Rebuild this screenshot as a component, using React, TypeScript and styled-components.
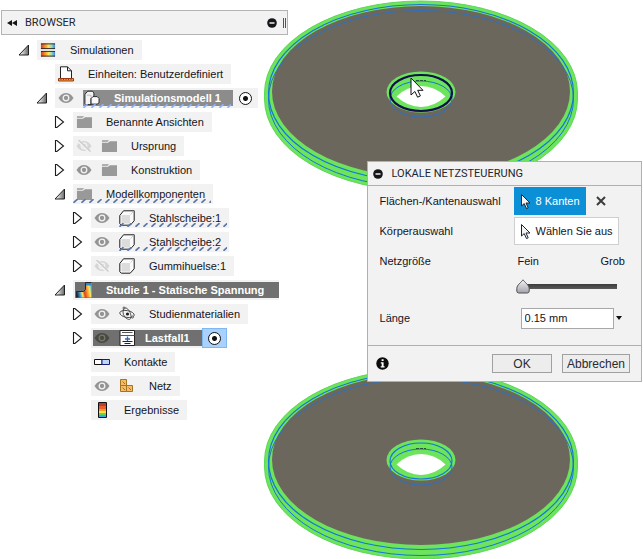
import React, { useState } from "react";
import styled, { createGlobalStyle, css } from "styled-components";

const GlobalStyle = createGlobalStyle`
  * { box-sizing: border-box; }
  body {
    margin: 0;
    background: #ffffff;
    color: #14141c;
    font: 11px/20px "Liberation Sans", Arial, sans-serif;
    overflow-x: hidden;
  }
  button, input { font: inherit; color: inherit; margin: 0; }
`;

const plainButton = css`
  display: flex;
  align-items: center;
  justify-content: center;
  padding: 0;
  border: 0;
  background: none;
  cursor: pointer;
`;

/* ---------- page ---------- */

const Page = styled.main`
  position: relative;
  display: grid;
  grid-template-columns: 45% minmax(0, 1fr) 43%;
  align-items: start;
  min-height: 100vh;
`;

const Scene = styled.svg`
  position: absolute;
  top: 0;
  left: 0;
  width: 100%;
  display: block;
`;

/* ---------- browser panel ---------- */

const BrowserPanel = styled.section`
  position: relative;
  padding-top: 10px;
`;

const BrowserHeader = styled.header`
  display: flex;
  align-items: center;
  height: 25px;
  margin: 0 1px;
  padding: 0 1px 0 5px;
  border: 1px solid #b4b4b4;
  background: #f2f2f2;
`;

const PanelTitle = styled.h2`
  flex: 1;
  margin: 0;
  padding-left: 8px;
  font: 400 11px/20px Roboto, "Liberation Sans", sans-serif;
  color: #22262e;
`;

const HeaderButton = styled.button<{ $width: number }>`
  ${plainButton}
  width: ${(p) => p.$width}px;
  height: 20px;
`;

const Grip = styled.span`
  width: 3px;
  height: 10px;
  margin-left: 6px;
  border: solid #555;
  border-width: 0 1px;
`;

const Tree = styled.ul`
  display: flex;
  flex-direction: column;
  gap: 4px;
  margin: 5px 0 0;
  padding: 0;
  list-style: none;
`;

const TreeRow = styled.li<{ $level: number }>`
  display: flex;
  height: 20px;
  padding-left: ${(p) => 15 + p.$level * 18}px;
`;

const Expander = styled.button`
  ${plainButton}
  width: 22px;
  height: 20px;
  justify-content: flex-start;
  padding-left: 3px;
`;

const ExpanderSpace = styled.span`
  width: 22px;
`;

const hatch = css`
  &::after {
    content: "";
    position: absolute;
    left: 0;
    right: 2px;
    bottom: 1px;
    height: 4px;
    background: url("data:image/svg+xml,%3Csvg xmlns='http://www.w3.org/2000/svg' width='8' height='4'%3E%3Cpath d='M0.5 3.8L4.5 0.2' stroke='%235c76a6' stroke-width='1.7'/%3E%3C/svg%3E") repeat-x;
  }
`;

const Bar = styled.div<{ $hatched?: boolean; $framed?: boolean }>`
  position: relative;
  display: flex;
  align-items: center;
  height: 20px;
  background: #f2f2f2;
  white-space: nowrap;
  padding: ${(p) => (p.$framed ? "2px 0 2px 2px" : "0 0 0 3px")};
  ${(p) => p.$hatched && hatch}
`;

const Highlight = styled.div<{ $tone: string; $hatched?: boolean; $pad: number }>`
  position: relative;
  display: flex;
  align-items: center;
  height: 16px;
  padding-left: ${(p) => p.$pad}px;
  background: ${(p) => p.$tone};
  color: #ffffff;
  font-weight: 700;
  ${(p) => p.$hatched && hatch}
  &::after { bottom: -2px; filter: brightness(1.5); }
`;

const IconSlot = styled.span`
  display: flex;
  width: 16px;
  height: 16px;
  margin-right: 9px;
`;

const EyeButton = styled.button`
  ${plainButton}
  width: 16px;
  height: 16px;
  margin-right: 9px;
`;

const Label = styled.span<{ $start?: number; $end?: number }>`
  padding: 0 ${(p) => p.$end ?? 8}px 0 ${(p) => p.$start ?? 5}px;
`;

const HatchSpan = styled.div`
  position: relative;
  display: flex;
  align-items: center;
  height: 20px;
  ${hatch}
`;

const RadioHolder = styled.label<{ $active?: boolean }>`
  display: flex;
  align-items: center;
  justify-content: center;
  width: 25px;
  height: 20px;
  ${(p) =>
    p.$active &&
    css`
      margin: -2px 0;
      background: #a9d1fb;
      border: 1px solid #7db8f0;
    `}
`;

const Radio = styled.input`
  appearance: none;
  width: 13px;
  height: 13px;
  border: 1px solid #111;
  border-radius: 50%;
  background: radial-gradient(circle, #111 0 2px, #fff 3px);
`;

/* ---------- dialog ---------- */

const Dialog = styled.form`
  position: relative;
  grid-column: 3;
  margin: 161px 1px 0 0;
  border: 1px solid #b0b0b0;
  background: #f2f2f2;
`;

const DialogHeader = styled.header`
  display: flex;
  align-items: center;
  height: 24px;
  padding-left: 4px;
  border-bottom: 1px solid #b0b0b0;
`;

const Fields = styled.div`
  display: flex;
  flex-direction: column;
  height: 159px;
  padding: 0 12px;
`;

const Field = styled.div<{ $height: number }>`
  display: grid;
  grid-template-columns: 134px minmax(0, 1fr);
  align-items: center;
  height: ${(p) => p.$height}px;
`;

const Controls = styled.div`
  display: flex;
  align-items: center;
`;

const PickButton = styled.button<{ $primary?: boolean }>`
  ${plainButton}
  gap: 4px;
  height: 28px;
  padding: 0 5px;
  border: 1px solid ${(p) => (p.$primary ? "#0b8fd6" : "#cfcfcf")};
  background: ${(p) => (p.$primary ? "#0b90d8" : "#ffffff")};
  color: ${(p) => (p.$primary ? "#ffffff" : "#14141c")};
  white-space: nowrap;
`;

const ClearButton = styled.button`
  ${plainButton}
  width: 10px;
  height: 20px;
  margin-left: 10px;
`;

const RangeNames = styled.div`
  display: flex;
  justify-content: space-between;
  padding: 0 4px;
`;

const Slider = styled.input`
  appearance: none;
  display: block;
  width: 102px;
  height: 16px;
  margin: 0 0 0 2px;
  background: linear-gradient(#3c3c3c, #5a5a5a) 10px 6px / 91px 5px no-repeat;
  &::-webkit-slider-thumb {
    appearance: none;
    width: 14px;
    height: 15px;
    background: url("data:image/svg+xml,%3Csvg xmlns='http://www.w3.org/2000/svg' width='14' height='15'%3E%3Cdefs%3E%3ClinearGradient id='g' x2='0' y2='1'%3E%3Cstop stop-color='%23f4f4f6'/%3E%3Cstop offset='1' stop-color='%23a2a3aa'/%3E%3C/linearGradient%3E%3C/defs%3E%3Cpath d='M7 .8C8.7 3.3 13.2 6 13.2 9.5V12q0 2-2 2H2.8q-2 0-2-2V9.5C.8 6 5.3 3.3 7 .8Z' fill='url(%23g)' stroke='%23505055'/%3E%3C/svg%3E");
  }
`;

const ValueInput = styled.input`
  width: 93px;
  height: 21px;
  margin-left: 7px;
  padding: 0 3px;
  border: 1px solid #a8a8a8;
  background: #ffffff;
`;

const DropButton = styled.button`
  ${plainButton}
  width: 10px;
  height: 20px;
`;

const DialogFooter = styled.footer`
  display: flex;
  align-items: center;
  justify-content: flex-end;
  gap: 10px;
  height: 36px;
  padding: 0 11px 0 8px;
  border-top: 1px solid #b0b0b0;
`;

const InfoButton = styled.button`
  ${plainButton}
  width: 13px;
  height: 20px;
  margin-right: auto;
`;

const ActionButton = styled.button<{ $width: number }>`
  ${plainButton}
  width: ${(p) => p.$width}px;
  height: 19px;
  border: 1px solid #a0a0a0;
  background: #ededed;
  color: #2a2a30;
  font-size: 12px;
`;

/* ---------- icons ---------- */

const MinusIcon = () => (
  <svg width="10" height="10" viewBox="0 0 10 10">
    <circle cx="5" cy="5" r="4.8" fill="#16161a" />
    <path d="M2.5 5h5" stroke="#fff" strokeWidth="1.4" />
  </svg>
);

const RewindIcon = () => (
  <svg width="10" height="8" viewBox="0 0 10 8">
    <path d="M5 1v6L0 4zM10 1v6L5 4z" fill="#16161a" />
  </svg>
);

const OpenTriangle = () => (
  <svg width="12" height="12" viewBox="0 0 12 12">
    <defs>
      <linearGradient id="openShade">
        <stop offset="0.2" stopColor="#eee" />
        <stop offset="1" stopColor="#666" />
      </linearGradient>
    </defs>
    <path d="M10.5 1v10H1z" fill="url(#openShade)" stroke="#222" />
  </svg>
);

const ClosedTriangle = () => (
  <svg width="12" height="14" viewBox="0 0 12 14">
    <path d="M1.5 1.5h1.4L9.5 7l-6.6 5.5H1.5z" fill="#fff" stroke="#1c1c1c" strokeWidth="1.1" />
  </svg>
);

const EyeIcon = ({ tone = "#949494", pupil = "#f2f2f2" }: { tone?: string; pupil?: string }) => (
  <svg width="16" height="12" viewBox="0 0 16 12">
    <path d="M.5 6C3 2.2 5.4 1 8 1s5 1.2 7.5 5C13 9.8 10.6 11 8 11S3 9.8.5 6z" fill={tone} />
    <circle cx="8" cy="6" r="2.8" fill="none" stroke={pupil} strokeWidth="1.3" />
  </svg>
);

const EyeOffIcon = () => (
  <svg width="16" height="12" viewBox="0 0 16 12">
    <path d="M.5 6C3 2.2 5.4 1 8 1s5 1.2 7.5 5C13 9.8 10.6 11 8 11S3 9.8.5 6z" fill="#d6d6d6" />
    <circle cx="8" cy="6" r="2.8" fill="none" stroke="#f2f2f2" strokeWidth="1.3" />
    <path d="M2 .5L14 12" stroke="#f2f2f2" strokeWidth="3" />
    <path d="M2.5 0L14.5 11.5" stroke="#cacaca" strokeWidth="1.3" />
  </svg>
);

const FolderIcon = () => (
  <svg width="17" height="16" viewBox="0 0 17 16">
    <path d="M1 2h7.5L7 3.5H1z" fill="#999" />
    <path d="M1 4.500h6.500L9.500 3H17v11.500H1z" fill="#999" />
  </svg>
);

const SimulationsIcon = () => (
  <svg width="17" height="16" viewBox="0 0 17 16">
    <defs>
      <linearGradient id="heat">
        <stop stopColor="#d43c22" />
        <stop offset="0.3" stopColor="#f59428" />
        <stop offset="0.55" stopColor="#ffe45c" />
        <stop offset="0.75" stopColor="#8fdcc8" />
        <stop offset="1" stopColor="#3f86d8" />
      </linearGradient>
    </defs>
    <path d="M1 1h15v6H1zM1 9h15v6H1z" fill="url(#heat)" />
    <path d="M1 1.500h15M1 6.500h15M1 9.500h15M1 14.500h15" stroke="#2b2522" />
  </svg>
);

const UnitsIcon = () => (
  <svg width="16" height="16" viewBox="0 0 16 16">
    <path d="M2.500 12.500V.8h7l4 4v7.700" fill="#fff" stroke="#222" />
    <path d="M9.500.8v4h4" fill="none" stroke="#222" />
    <path d="M.5 12.500h15v2.500H.5z" fill="#e9a23a" stroke="#9c3a16" />
    <path d="M3 12.500v1.500M5.500 12.500v1.500M8 12.500v1.500M10.500 12.500v1.500M13 12.500v1.500" stroke="#9c3a16" />
  </svg>
);

const BodyGroupIcon = () => (
  <svg width="17" height="16" viewBox="0 0 17 16">
    <path d="M1 14V4L4 .8h5l1.500 2v3.700L7.500 8.500V15H2z" fill="#f4f4f4" stroke="#222" />
    <path d="M7.500 8.500L9.500 6.500h4.500l2 2V13l-2 1.500H7.500z" fill="#f8f8f8" stroke="#222" />
    <path d="M3 5h4.500v2.500" fill="none" stroke="#bbb" />
  </svg>
);

const CubeIcon = () => (
  <svg width="16" height="16" viewBox="0 0 16 16">
    <path d="M.8 5.500L4.500.8H15.200V10.800l-4 4.400H2.300L.8 13.700z" fill="#fafafa" stroke="#1c1c1c" />
    <path d="M2.500 5h8.500v8.500H2.500z" fill="#dcdcdc" />
    <path d="M11.500 4.500l3-3" stroke="#cfcfcf" />
  </svg>
);

const StudyIcon = () => (
  <svg width="16" height="16" viewBox="0 0 16 16">
    <defs>
      <linearGradient id="studyHeat" x1="0" y1="0.6" x2="1" y2="0.4">
        <stop stopColor="#1d2a3c" />
        <stop offset="0.2" stopColor="#3aa0dc" />
        <stop offset="0.35" stopColor="#ffe45c" />
        <stop offset="0.5" stopColor="#e5401e" />
        <stop offset="0.7" stopColor="#f79a32" />
        <stop offset="0.85" stopColor="#ffe45c" />
        <stop offset="1" stopColor="#58c8e8" />
      </linearGradient>
    </defs>
    <path d="M9.500.5h6v15H.5V9.500h7l2-2z" fill="url(#studyHeat)" />
    <path d="M15.500.5h-6v7l-2 2H.5v6" fill="none" stroke="#25272c" />
    <path d="M10 1h5.500v2.500H10z" fill="#2f86d0" />
  </svg>
);

const MaterialsIcon = () => (
  <svg width="16" height="16" viewBox="0 0 16 16" fill="none" stroke="#444" strokeWidth="0.9">
    <ellipse cx="8" cy="8" rx="7.300" ry="3.400" transform="rotate(10 8 8)" />
    <path d="M4 6C4 3 5 1.500 7 2c2.500.8 5 5 5 8.500 0 3-1.500 3.500-3.500 2.500C6 12 4 9 4 6z" />
    <circle cx="8.500" cy="8" r="1.600" fill="#1c1c1c" stroke="none" />
    <circle cx="5" cy="2" r="1" fill="#fff" />
    <circle cx="13.500" cy="11" r="1" fill="#fff" />
  </svg>
);

const LoadCaseIcon = () => (
  <svg width="16" height="16" viewBox="0 0 16 16">
    <path d="M1 .5h14.500v15H1z" fill="#fff" stroke="#222" />
    <path d="M3 2.500h10.500M1 5.500h14.500" stroke="#555" />
    <path d="M8.500 6.500v4.500M6 9h5" stroke="#2767c8" strokeWidth="1.300" />
    <path d="M3.500 11.500h10M5.500 13.500h6" stroke="#222" />
  </svg>
);

const ContactsIcon = () => (
  <svg width="16" height="16" viewBox="0 0 16 16">
    <path d="M.5 5.500H8v5H.5z" fill="#fff" stroke="#111" />
    <path d="M8 5.500h7.500v5H8z" fill="#bcd6f8" stroke="#1b1b7c" />
  </svg>
);

const MeshIcon = () => (
  <svg width="16" height="16" viewBox="0 0 16 16" fill="#f6bd66" stroke="#a07424">
    <path d="M1.500 1.500h6v6h-6zM1.500 7.500h6v6h-6zM7.500 7.500h6v6h-6z" />
    <path d="M3.500 3.500l2.500 2.500M3.500 9.500l2.500 2.500M9.500 9.500l2.500 2.500" />
  </svg>
);

const ResultsIcon = () => (
  <svg width="16" height="16" viewBox="0 0 16 16">
    <path d="M4 1h8v14H4z" fill="#e8602c" />
    <path d="M4 1h8v3H4z" fill="#b8402c" />
    <path d="M4 7h8v2H4z" fill="#f79a22" />
    <path d="M4 9h8v2H4z" fill="#fbe23c" />
    <path d="M4 11h8v2H4z" fill="#5cd65c" />
    <path d="M4 13h8v2H4z" fill="#38a8e8" />
    <path d="M4.500.5h8v15h-8z" fill="none" stroke="#111" />
  </svg>
);

const PointerIcon = () => (
  <svg width="12" height="17" viewBox="0 0 12 17">
    <path d="M1.500 1.500v11.500l2.700-2.400 2.300 5 1.700-.8-2.200-4.800h4z" fill="#f4f4f4" stroke="#1c2430" />
  </svg>
);

const CrossIcon = () => (
  <svg width="10" height="10" viewBox="0 0 10 10">
    <path d="M1 1l8 8M9 1L1 9" stroke="#3c3c3c" strokeWidth="2" />
  </svg>
);

const CaretIcon = () => (
  <svg width="6" height="4" viewBox="0 0 6 4">
    <path d="M0 0h6L3 4z" fill="#111" />
  </svg>
);

const InfoIcon = () => (
  <svg width="13" height="13" viewBox="0 0 13 13">
    <circle cx="6.500" cy="6.500" r="6.200" fill="#0c0c0e" />
    <path d="M5.600 2.300h2v1.800h-2zM4.800 5.300h2.800v4h1v1.300H4.700V9.300h1V6.600h-.9z" fill="#fff" />
  </svg>
);

/* ---------- 3D scene ---------- */

const Disc = ({ top, hovered }: { top: number; hovered?: boolean }) => (
  <g transform={`translate(421 ${top})`} fill="none">
    <g fill="#6ee35c" stroke="#6ee35c" strokeWidth="8">
      <ellipse rx="152.500" ry="88" />
      <ellipse cy="6" rx="152.500" ry="88" />
    </g>
    <path
      d="M-156.500 0A156.500 92 0 0 1 156.500 0V6A156.500 92 0 0 1 -156.500 6Z"
      stroke="#5ed858"
    />
    <ellipse cy="-1.500" rx="149" ry="85.500" fill="#6c675c" />
    <path d="M-152.500 6A152.500 88.500 0 0 1 152.500 6" stroke="#2e70bd" />
    <path d="M-152.500 6A152.500 88.500 0 0 0 152.500 6" stroke="#1277d8" />
    <ellipse rx="152.500" ry="88.500" stroke="#1277d8" strokeWidth="1.200" />
    <ellipse cy="-1" rx="34.500" ry="20.500" fill="#6ee35c" />
    <path d="M-24.500 3.500Q-14-7 0-7T24.500 3.500Q13 14 0 14T-24.500 3.500Z" fill="#fff" />
    <path d="M-31 6A31 18 0 0 1 31 6" stroke="#1277d8" />
    <path d="M-31 6A31 18 0 0 0 31 6" stroke="#2e70bd" />
    <ellipse
      rx="31"
      ry="18"
      stroke={hovered ? "#10104c" : "#1277d8"}
      strokeWidth={hovered ? 2.2 : 1.2}
    />
    <path d="M-5-12.500H5" stroke="#24543c" strokeDasharray="3 1" />
  </g>
);

const SceneView = () => (
  <Scene viewBox="0 0 643 559" aria-hidden="true">
    <Disc top={93} hovered />
    <Disc top={461} />
    <path
      d="M411 78v17l3.900-3.500 2.700 5.700 2.800-1.300-2.700-5.600h5.300z"
      fill="#fff"
      stroke="#111"
    />
  </Scene>
);

/* ---------- tree data ---------- */

type Node = {
  label: string;
  level: number;
  expander?: "open" | "closed";
  eye?: "on" | "off";
  icon: React.ReactNode;
  style?: "hatched" | "hatchedItem" | "model" | "study" | "load";
};

const nodes: Node[] = [
  { label: "Simulationen", level: 0, expander: "open", icon: <SimulationsIcon /> },
  { label: "Einheiten: Benutzerdefiniert", level: 1, icon: <UnitsIcon /> },
  { label: "Simulationsmodell 1", level: 1, expander: "open", eye: "on", icon: <BodyGroupIcon />, style: "model" },
  { label: "Benannte Ansichten", level: 2, expander: "closed", icon: <FolderIcon /> },
  { label: "Ursprung", level: 2, expander: "closed", eye: "off", icon: <FolderIcon /> },
  { label: "Konstruktion", level: 2, expander: "closed", eye: "on", icon: <FolderIcon /> },
  { label: "Modellkomponenten", level: 2, expander: "open", icon: <FolderIcon />, style: "hatched" },
  { label: "Stahlscheibe:1", level: 3, expander: "closed", eye: "on", icon: <CubeIcon />, style: "hatchedItem" },
  { label: "Stahlscheibe:2", level: 3, expander: "closed", eye: "on", icon: <CubeIcon />, style: "hatchedItem" },
  { label: "Gummihuelse:1", level: 3, expander: "closed", eye: "off", icon: <CubeIcon /> },
  { label: "Studie 1 - Statische Spannung", level: 2, expander: "open", icon: <StudyIcon />, style: "study" },
  { label: "Studienmaterialien", level: 3, expander: "closed", eye: "on", icon: <MaterialsIcon /> },
  { label: "Lastfall1", level: 3, expander: "closed", eye: "on", icon: <LoadCaseIcon />, style: "load" },
  { label: "Kontakte", level: 3, icon: <ContactsIcon /> },
  { label: "Netz", level: 3, eye: "on", icon: <MeshIcon /> },
  { label: "Ergebnisse", level: 3, icon: <ResultsIcon /> },
];

const Eye = ({ node }: { node: Node }) => {
  const [visible, setVisible] = useState(node.eye === "on");
  if (!node.eye) return null;
  const dark = node.style === "load";
  return (
    <EyeButton type="button" aria-label={`Sichtbarkeit ${node.label}`} aria-pressed={visible} onClick={() => setVisible(!visible)}>
      {visible ? <EyeIcon tone={dark ? "#484a42" : undefined} pupil={dark ? "#77776f" : undefined} /> : <EyeOffIcon />}
    </EyeButton>
  );
};

const NodeBar = ({ node }: { node: Node }) => {
  const eye = <Eye node={node} />;
  const icon = <IconSlot>{node.icon}</IconSlot>;
  switch (node.style) {
    case "model":
      return (
        <Bar>
          {eye}
          <Highlight $tone="#8c8c8c" $hatched $pad={1}>
            {icon}
            <Label $end={12}>{node.label}</Label>
          </Highlight>
          <RadioHolder aria-label={node.label}>
            <Radio type="radio" name="model" defaultChecked />
          </RadioHolder>
        </Bar>
      );
    case "study":
      return (
        <Bar $framed>
          <Highlight $tone="#707070" $pad={1}>
            {icon}
            <Label $end={15}>{node.label}</Label>
          </Highlight>
        </Bar>
      );
    case "load":
      return (
        <Bar $framed>
          <Highlight $tone="#707070" $pad={1}>
            {eye}
            {icon}
            <Label $start={1} $end={12}>{node.label}</Label>
          </Highlight>
          <RadioHolder $active aria-label={node.label}>
            <Radio type="radio" name="loadcase" defaultChecked />
          </RadioHolder>
        </Bar>
      );
    case "hatchedItem":
      return (
        <Bar>
          {eye}
          <HatchSpan>
            {icon}
            <Label>{node.label}</Label>
          </HatchSpan>
        </Bar>
      );
    default:
      return (
        <Bar $hatched={node.style === "hatched"}>
          {eye}
          {icon}
          <Label>{node.label}</Label>
        </Bar>
      );
  }
};

export default function App() {
  const [length, setLength] = useState("0.15 mm");
  return (
    <>
      <GlobalStyle />
      <Page>
        <SceneView />
        <BrowserPanel>
          <BrowserHeader>
            <HeaderButton type="button" $width={10} aria-label="Einklappen">
              <RewindIcon />
            </HeaderButton>
            <PanelTitle>BROWSER</PanelTitle>
            <HeaderButton type="button" $width={10} aria-label="Minimieren">
              <MinusIcon />
            </HeaderButton>
            <Grip />
          </BrowserHeader>
          <Tree>
            {nodes.map((node) => (
              <TreeRow key={node.label} $level={node.level}>
                {node.expander ? (
                  <Expander type="button" aria-label={node.label} aria-expanded={node.expander === "open"}>
                    {node.expander === "open" ? <OpenTriangle /> : <ClosedTriangle />}
                  </Expander>
                ) : (
                  <ExpanderSpace />
                )}
                <NodeBar node={node} />
              </TreeRow>
            ))}
          </Tree>
        </BrowserPanel>
        <Dialog onSubmit={(e) => e.preventDefault()}>
          <DialogHeader>
            <HeaderButton type="button" $width={12} aria-label="Minimieren">
              <MinusIcon />
            </HeaderButton>
            <PanelTitle>LOKALE NETZSTEUERUNG</PanelTitle>
          </DialogHeader>
          <Fields>
            <Field $height={30}>
              <label htmlFor="edges">Flächen-/Kantenauswahl</label>
              <Controls>
                <PickButton id="edges" type="button" $primary>
                  <PointerIcon />8 Kanten
                </PickButton>
                <ClearButton type="button" aria-label="Auswahl aufheben">
                  <CrossIcon />
                </ClearButton>
              </Controls>
            </Field>
            <Field $height={30}>
              <label htmlFor="bodies">Körperauswahl</label>
              <Controls>
                <PickButton id="bodies" type="button">
                  <PointerIcon />Wählen Sie aus
                </PickButton>
              </Controls>
            </Field>
            <Field $height={30}>
              <label htmlFor="size">Netzgröße</label>
              <RangeNames>
                <span>Fein</span>
                <span>Grob</span>
              </RangeNames>
            </Field>
            <Field $height={20}>
              <span />
              <Slider id="size" type="range" defaultValue={0} />
            </Field>
            <Field $height={44}>
              <label htmlFor="length">Länge</label>
              <Controls>
                <ValueInput id="length" value={length} onChange={(e) => setLength(e.target.value)} />
                <DropButton type="button" aria-label="Werte">
                  <CaretIcon />
                </DropButton>
              </Controls>
            </Field>
          </Fields>
          <DialogFooter>
            <InfoButton type="button" aria-label="Info">
              <InfoIcon />
            </InfoButton>
            <ActionButton type="submit" $width={60}>OK</ActionButton>
            <ActionButton type="button" $width={68}>Abbrechen</ActionButton>
          </DialogFooter>
        </Dialog>
      </Page>
    </>
  );
}
